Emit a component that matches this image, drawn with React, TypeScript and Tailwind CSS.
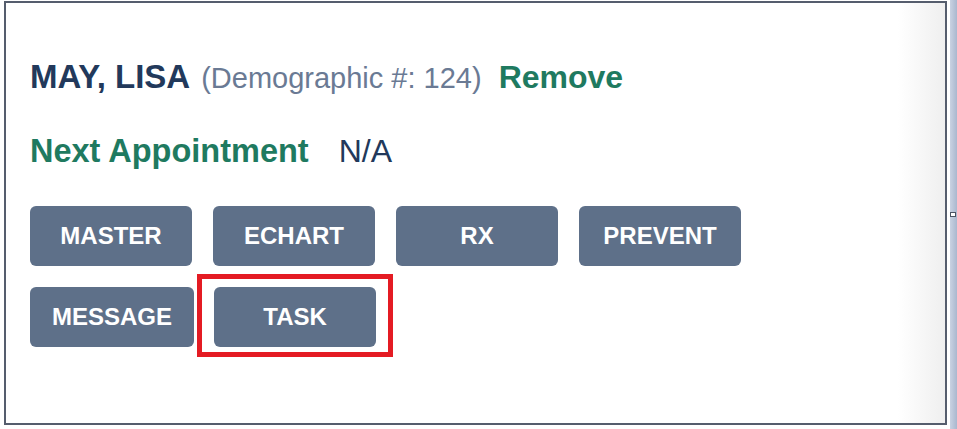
const actions = ["MASTER", "ECHART", "RX", "PREVENT"];

function ActionButton({ label }: { label: string }) {
  return (
    <button className="h-[60px] min-w-[162px] rounded-[6px] bg-[#5e7089] px-[22px] text-[24px] font-bold text-white">
      {label}
    </button>
  );
}

export default function App() {
  return (
    <div
      className="flex h-[429px] w-[957px] bg-white"
      style={{ fontFamily: '"Liberation Sans", Arial, sans-serif' }}
    >
      <div className="pl-[4px] pt-[1px]">
        <div className="h-[424px] w-[943px] border-2 border-[#555d6d] bg-linear-to-r from-white from-95% to-[#efefef] pl-[24px] pt-[56px]">
          <div className="flex items-baseline leading-[36px]">
            <span className="text-[33px] font-bold text-[#22395b]">MAY, LISA</span>
            <span className="ml-[11px] text-[29px] text-[#6a7a94]">(Demographic #: 124)</span>
            <span className="ml-[17px] text-[32px] font-bold text-[#1f7a60]">Remove</span>
          </div>
          <div className="mt-[37px] flex items-baseline leading-[36px]">
            <span className="text-[32.5px] font-bold text-[#1f7a60]">Next Appointment</span>
            <span className="ml-[30px] text-[32px] text-[#22395b]">N/A</span>
          </div>
          <div className="mt-[37px] flex flex-col gap-[21px]">
            <div className="flex gap-[21px]">
              {actions.map((a) => (
                <ActionButton key={a} label={a} />
              ))}
            </div>
            <div className="flex gap-[20px]">
              <ActionButton label="MESSAGE" />
              <div className="relative">
                <ActionButton label="TASK" />
                <div className="pointer-events-none absolute -bottom-[10px] -left-[17px] -right-[17px] -top-[13px] border-[5px] border-[#e41b23]" />
              </div>
            </div>
          </div>
        </div>
      </div>
      <div className="ml-[3px] flex w-[7px] flex-col bg-linear-to-r from-[#c9d2e2] to-[#a9b7ce] pt-[212px]">
        <div className="h-[5px] w-[6px] border border-[#4b5363] bg-white" />
      </div>
    </div>
  );
}
